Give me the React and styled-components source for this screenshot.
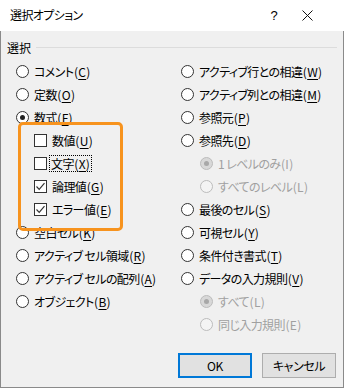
import React from "react";
import styled, { createGlobalStyle } from "styled-components";

const Global = createGlobalStyle`
  html, body { margin: 0; padding: 0; background: #f0f0f0; }
  body {
    font-family: "Noto Sans CJK JP", "Noto Sans", sans-serif;
    font-size: 12px;
    font-feature-settings: "palt";
    color: #000;
  }
`;

const Window = styled.div`
  width: 344px;
  height: 388px;
  display: flex;
  flex-direction: column;
  box-sizing: border-box;
  overflow: hidden;
`;

const TitleBar = styled.div`
  height: 31px;
  flex: none;
  background: #fff;
  display: flex;
  align-items: center;
  padding-left: 10px;
`;

const Title = styled.div`
  flex: 1;
  font-size: 12px;
  line-height: 16px;
  letter-spacing: -0.6px;
  margin-top: -1px;
`;

const HelpButton = styled.div`
  width: 40px;
  text-align: center;
  font-family: "Liberation Sans", sans-serif;
  font-size: 13px;
  margin-right: 4px;
`;

const CloseButton = styled.div`
  width: 40px;
  display: flex;
  align-items: center;
  justify-content: flex-start;
  padding-left: 4px;
  margin-right: 2px;
`;

const Body = styled.div`
  flex: 1;
  position: relative;
  display: flex;
  flex-direction: column;
  border: 1px solid #8a8a8a;
  border-top: none;
  background: #f0f0f0;
`;

const GroupHeader = styled.div`
  display: flex;
  align-items: center;
  gap: 5px;
  height: 16px;
  margin-top: 8px;
  padding: 0 6px 0 6px;
`;

const GroupLine = styled.div`
  flex: 1;
  height: 1px;
  background: #dcdcdc;
  margin-top: 1px;
`;

const Columns = styled.div`
  display: grid;
  grid-template-columns: 165px 1fr;
  margin-top: 5px;
  padding-left: 15px;
`;

const Column = styled.div`
  display: flex;
  flex-direction: column;
`;

const Row = styled.div`
  height: 23px;
  display: flex;
  align-items: center;
  gap: 4px;
  padding-left: ${(p) => p.$indent || 0}px;
  color: ${(p) => (p.$disabled ? "#a0a0a0" : "#000")};
  white-space: nowrap;
`;

const RadioCircle = styled.span`
  width: 13px;
  height: 13px;
  box-sizing: border-box;
  border-radius: 50%;
  border: 1px solid ${(p) => (p.$disabled ? "#bcbcbc" : "#333")};
  background: ${(p) => (p.$disabled ? (p.$checked ? "#d8d8d8" : "#f4f4f4") : "#fff")};
  display: flex;
  align-items: center;
  justify-content: center;
  flex: none;
  &::after {
    content: "";
    display: ${(p) => (p.$checked ? "block" : "none")};
    width: 5px;
    height: 5px;
    border-radius: 50%;
    background: ${(p) => (p.$disabled ? "#a8a8a8" : "#222")};
  }
`;

const CheckBox = styled.span`
  width: 13px;
  height: 13px;
  box-sizing: border-box;
  border: 1px solid #333;
  background: #fff;
  flex: none;
  display: flex;
  align-items: center;
  justify-content: center;
`;

const Label = styled.span`
  line-height: 15px;
  padding: 0 1px;
  letter-spacing: -0.6px;
  margin-left: ${(p) => (p.$focus ? -1 : 0)}px;
  outline: ${(p) => (p.$focus ? "1px dotted #000" : "none")};
  outline-offset: 0px;
  u { text-decoration: underline; text-underline-offset: 2px; }
`;

const Key = styled.span`
  letter-spacing: 0.3px;
  margin-left: 0.5px;
`;

const Highlight = styled.div`
  position: absolute;
  left: 17px;
  top: 91px;
  width: 105px;
  height: 109px;
  box-sizing: border-box;
  border: 3px solid #f7931e;
  border-radius: 5px;
  pointer-events: none;
`;

const ButtonRow = styled.div`
  margin-top: auto;
  display: flex;
  justify-content: flex-end;
  gap: 10px;
  padding: 0 7px 9px 0;
`;

const Button = styled.button`
  width: 74px;
  height: 25px;
  box-sizing: border-box;
  background: #e1e1e1;
  border: ${(p) => (p.$primary ? "2px solid #0078d7" : "1px solid #adadad")};
  font-family: inherit;
  font-size: 12px;
  font-feature-settings: "palt";
  letter-spacing: -0.4px;
  color: #000;
  padding: 0;
`;

const Check = () => (
  <svg width="11" height="11" viewBox="0 0 11 11">
    <polyline points="1.5,5.5 4.2,8.3 9.5,2.2" fill="none" stroke="#333" strokeWidth="1.2" />
  </svg>
);

const Radio = ({ checked, disabled, indent, children }) => (
  <Row $indent={indent} $disabled={disabled}>
    <RadioCircle $checked={checked} $disabled={disabled} />
    <Label>{children}</Label>
  </Row>
);

const CheckRow = ({ checked, focus, children }) => (
  <Row $indent={18}>
    <CheckBox>{checked && <Check />}</CheckBox>
    <Label $focus={focus}>{children}</Label>
  </Row>
);

const K = ({ k, plain }) => (
  <Key>
    ({plain ? k : <u>{k}</u>})
  </Key>
);

export default function App() {
  return (
    <>
      <Global />
      <Window>
        <TitleBar>
          <Title>選択オプション</Title>
          <HelpButton>?</HelpButton>
          <CloseButton>
            <svg width="11" height="11" viewBox="0 0 11 11">
              <path d="M0.5 0.5 L10.5 10.5 M10.5 0.5 L0.5 10.5" stroke="#111" strokeWidth="1" fill="none" />
            </svg>
          </CloseButton>
        </TitleBar>
        <Body>
          <GroupHeader>
            <span>選択</span>
            <GroupLine />
          </GroupHeader>
          <Columns>
            <Column>
              <Radio>コメント<K k="C" /></Radio>
              <Radio>定数<K k="O" /></Radio>
              <Radio checked>数式<K k="F" /></Radio>
              <CheckRow>数値<K k="U" /></CheckRow>
              <CheckRow focus>文字<K k="X" /></CheckRow>
              <CheckRow checked>論理値<K k="G" /></CheckRow>
              <CheckRow checked>エラー値<K k="E" /></CheckRow>
              <Radio>空白セル<K k="K" /></Radio>
              <Radio>アクティブ セル領域<K k="R" /></Radio>
              <Radio>アクティブ セルの配列<K k="A" /></Radio>
              <Radio>オブジェクト<K k="B" /></Radio>
            </Column>
            <Column>
              <Radio>アクティブ行との相違<K k="W" /></Radio>
              <Radio>アクティブ列との相違<K k="M" /></Radio>
              <Radio>参照元<K k="P" /></Radio>
              <Radio>参照先<K k="D" /></Radio>
              <Radio disabled checked indent={19}>1 レベルのみ<K k="I" plain /></Radio>
              <Radio disabled indent={19}>すべてのレベル<K k="L" plain /></Radio>
              <Radio>最後のセル<K k="S" /></Radio>
              <Radio>可視セル<K k="Y" /></Radio>
              <Radio>条件付き書式<K k="T" /></Radio>
              <Radio>データの入力規則<K k="V" /></Radio>
              <Radio disabled checked indent={19}>すべて<K k="L" plain /></Radio>
              <Radio disabled indent={19}>同じ入力規則<K k="E" plain /></Radio>
            </Column>
          </Columns>
          <Highlight />
          <ButtonRow>
            <Button $primary>OK</Button>
            <Button>キャンセル</Button>
          </ButtonRow>
        </Body>
      </Window>
    </>
  );
}
